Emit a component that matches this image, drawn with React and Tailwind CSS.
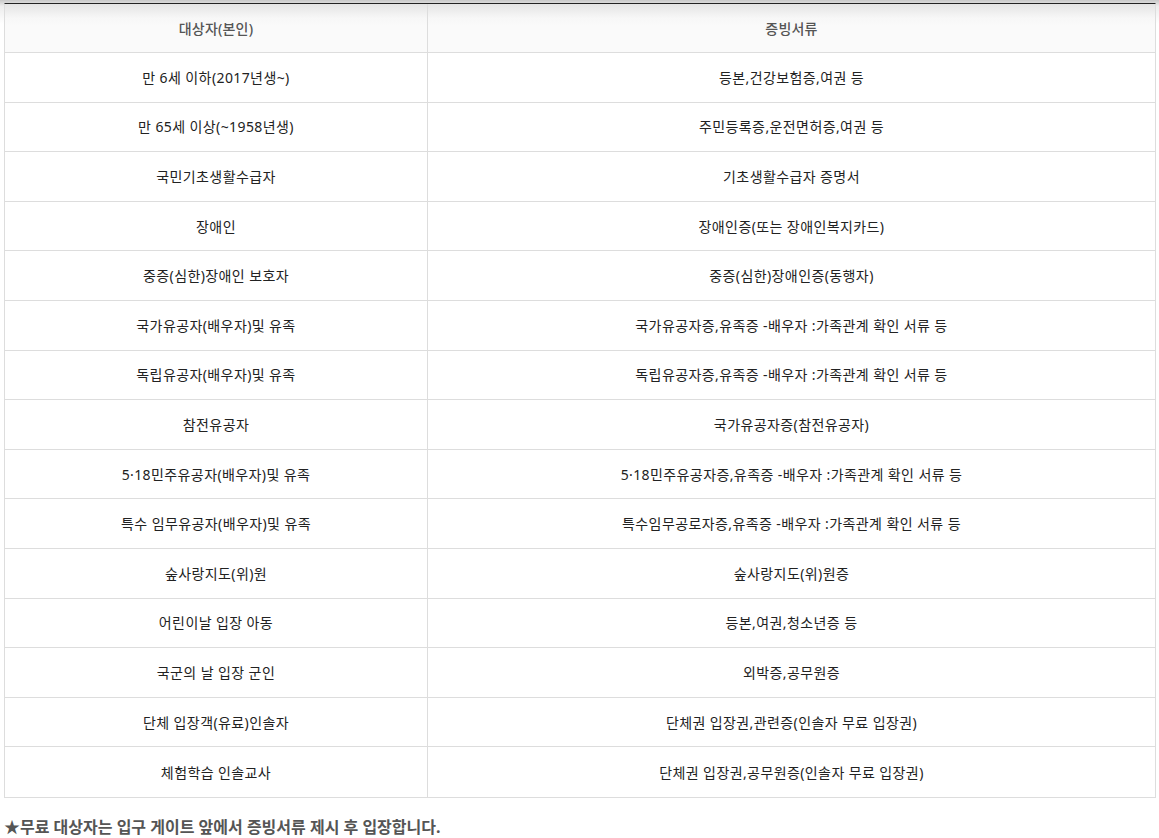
const rows = [
  ["만 6세 이하(2017년생~)", "등본,건강보험증,여권 등"],
  ["만 65세 이상(~1958년생)", "주민등록증,운전면허증,여권 등"],
  ["국민기초생활수급자", "기초생활수급자 증명서"],
  ["장애인", "장애인증(또는 장애인복지카드)"],
  ["중증(심한)장애인 보호자", "중증(심한)장애인증(동행자)"],
  ["국가유공자(배우자)및 유족", "국가유공자증,유족증 -배우자 :가족관계 확인 서류 등"],
  ["독립유공자(배우자)및 유족", "독립유공자증,유족증 -배우자 :가족관계 확인 서류 등"],
  ["참전유공자", "국가유공자증(참전유공자)"],
  ["5·18민주유공자(배우자)및 유족", "5·18민주유공자증,유족증 -배우자 :가족관계 확인 서류 등"],
  ["특수 임무유공자(배우자)및 유족", "특수임무공로자증,유족증 -배우자 :가족관계 확인 서류 등"],
  ["숲사랑지도(위)원", "숲사랑지도(위)원증"],
  ["어린이날 입장 아동", "등본,여권,청소년증 등"],
  ["국군의 날 입장 군인", "외박증,공무원증"],
  ["단체 입장객(유료)인솔자", "단체권 입장권,관련증(인솔자 무료 입장권)"],
  ["체험학습 인솔교사", "단체권 입장권,공무원증(인솔자 무료 입장권)"],
];

export default function App() {
  return (
    <div
      className="w-[1159px] h-[838px] overflow-hidden bg-white text-[#222] bg-[linear-gradient(to_bottom,#c8c8c8_0px,#ececec_6px,#ffffff_24px,#ffffff_100%)]"
      style={{ fontFamily: '"Noto Sans", "Noto Sans CJK KR", sans-serif' }}
    >
      <div className="pt-[3px] pl-[4px]">
        <div className="w-[1152px] border-t border-t-[#222] border-x border-x-[#dddddd] border-b border-b-[#dddddd]">
          <div className="flex h-[49px] border-b border-[#dddddd] bg-[linear-gradient(to_bottom,#e4e4e4_0px,#f7f7f7_14px,#fafafa_22px,#fafafa_100%)] text-[14px] tracking-[0.2px] font-medium text-[#555]">
            <div className="w-[423px] border-r border-[#dddddd] flex items-center justify-center">대상자(본인)</div>
            <div className="flex-1 flex items-center justify-center">증빙서류</div>
          </div>
          {rows.map((r, i) => (
            <div
              key={i}
              className={`flex h-[49.6px] text-[14px] tracking-[0.4px] ${i < rows.length - 1 ? "border-b border-[#dddddd]" : ""}`}
            >
              <div className="w-[423px] border-r border-[#dddddd] flex items-center justify-center">{r[0]}</div>
              <div className="flex-1 flex items-center justify-center">{r[1]}</div>
            </div>
          ))}
        </div>
      </div>
      <div className="pl-[4px] pt-[17px] text-[16px] font-bold text-[#555]">
        ★무료 대상자는 입구 게이트 앞에서 증빙서류 제시 후 입장합니다.
      </div>
    </div>
  );
}
